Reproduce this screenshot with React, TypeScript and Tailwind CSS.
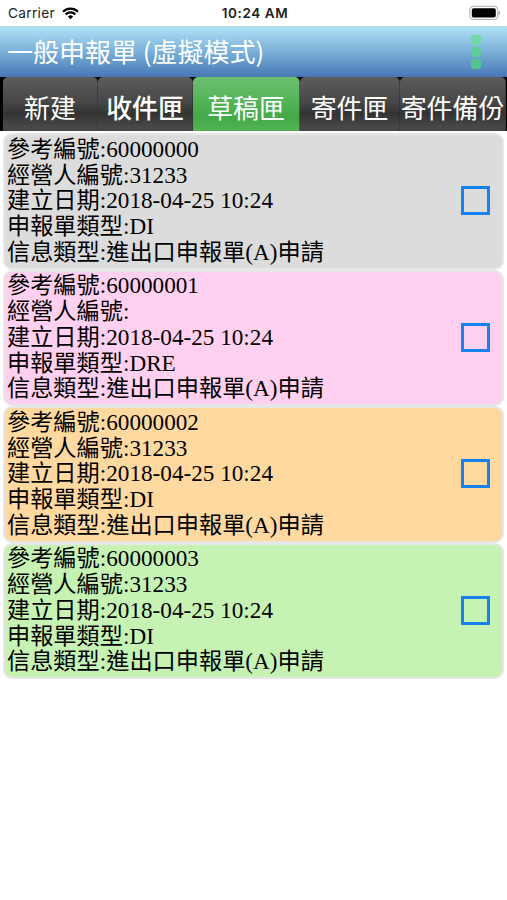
type Entry = { id: string; operator: string; kind: string; tone: string };

const entries: Entry[] = [
  { id: '60000000', operator: '31233', kind: 'DI', tone: 'bg-[#dcdcdc]' },
  { id: '60000001', operator: '', kind: 'DRE', tone: 'bg-[#ffd0f0]' },
  { id: '60000002', operator: '31233', kind: 'DI', tone: 'bg-[#ffd9a0]' },
  { id: '60000003', operator: '31233', kind: 'DI', tone: 'bg-[#c6f3b4]' },
];

const darkTab = 'bg-[linear-gradient(#5c5c5c_0%,#484848_45%,#333333_68%,#484848_92%,#444444_100%)]';

const tabs = [
  { label: '新建', style: `w-[95px] ml-[3px] ${darkTab}` },
  { label: '收件匣', style: `w-[95px] font-medium ${darkTab}` },
  { label: '草稿匣', style: 'w-[107px] bg-[linear-gradient(#6cc070_0%,#50b254_50%,#44a947_75%,#52b455_100%)]' },
  { label: '寄件匣', style: `w-[100px] ${darkTab}` },
  { label: '寄件備份', style: `w-[106px] ${darkTab}` },
];

function StatusBar() {
  return (
    <div className="grid h-[26px] grid-cols-3 items-center pl-2 pr-[6px] text-[13.5px] leading-none text-[#222]">
      <div className="flex items-center gap-[7px] pt-[2px]">
        <span className="text-[13.7px] tracking-[0.3px]">Carrier</span>
        <svg width="17" height="13" viewBox="0 0 17 13" fill="none" stroke="#000" strokeWidth="2.2">
          <path d="M1 4.7a10.7 10.7 0 0 1 15 0" />
          <path d="M3.7 7.4a6.8 6.8 0 0 1 9.6 0" />
          <path d="M5.9 9.6a3.7 3.7 0 0 1 5.2 0L8.5 12.3Z" fill="#000" stroke="none" />
        </svg>
      </div>
      <span className="whitespace-nowrap pl-px pt-[2px] text-center font-semibold tracking-[0.6px]">10:24 AM</span>
      <svg className="justify-self-end" width="32" height="16" viewBox="0 0 32 16">
        <rect x=".8" y="1.3" width="28" height="13.2" rx="3.5" fill="#fff" stroke="#aaa" />
        <rect x="2.8" y="3.3" width="24" height="9.2" rx="1.8" fill="#000" />
        <path d="M30 6v4q1.5-2 0-4Z" fill="#999" stroke="#999" strokeWidth=".5" />
      </svg>
    </div>
  );
}

function Card({ entry }: { entry: Entry }) {
  return (
    <li className={`flex h-[136.5px] items-center justify-between rounded-[9px] border-2 border-[#e7e7e7] pl-[2px] pr-[12px] ${entry.tone}`}>
      <div className="whitespace-nowrap font-['Liberation_Serif','Noto_Sans_CJK_TC',serif] text-[23.2px] leading-[25.7px] text-black">
        <p>參考編號:{entry.id}</p>
        <p>經營人編號:{entry.operator}</p>
        <p>建立日期:2018-04-25 10:24</p>
        <p>申報單類型:{entry.kind}</p>
        <p>信息類型:進出口申報單(A)申請</p>
      </div>
      <span className="mb-px size-[29px] border-[3px] border-[#1682f0]" />
    </li>
  );
}

export default function App() {
  return (
    <div className="h-[900px] w-[507px] overflow-hidden bg-white font-['Inter','Noto_Sans_CJK_TC',sans-serif]">
      <StatusBar />
      <header className="flex h-[51px] items-center justify-between bg-[linear-gradient(#b2e2f4,#80b6dc_45%,#4677b5)] pl-[7px] pr-[26px]">
        <h1 className="whitespace-nowrap pb-[2px] font-['Noto_Sans_CJK_TC',sans-serif] text-[26px] font-normal leading-none text-white">一般申報單 (虛擬模式)</h1>
        <div className="flex flex-col gap-[2px] pt-px">
          <i className="size-[10px] rounded-[3px] bg-[#71d7a5]" />
          <i className="size-[10px] rounded-[3px] bg-[#60cb9c]" />
          <i className="size-[10px] rounded-[3px] bg-[#54c58e]" />
        </div>
      </header>
      <nav className="flex h-[54px] bg-black">
        {tabs.map((tab) => (
          <button
            key={tab.label}
            className={`shrink-0 whitespace-nowrap rounded-t-[5px] border-r border-[#303030]/60 pt-[6px] font-['Noto_Sans_CJK_TC',sans-serif] text-[25.9px] leading-none text-white ${tab.style}`}
          >
            {tab.label}
          </button>
        ))}
      </nav>
      <ul className="mx-[3px] mt-[2px]">
        {entries.map((entry) => (
          <Card key={entry.id} entry={entry} />
        ))}
      </ul>
    </div>
  );
}
